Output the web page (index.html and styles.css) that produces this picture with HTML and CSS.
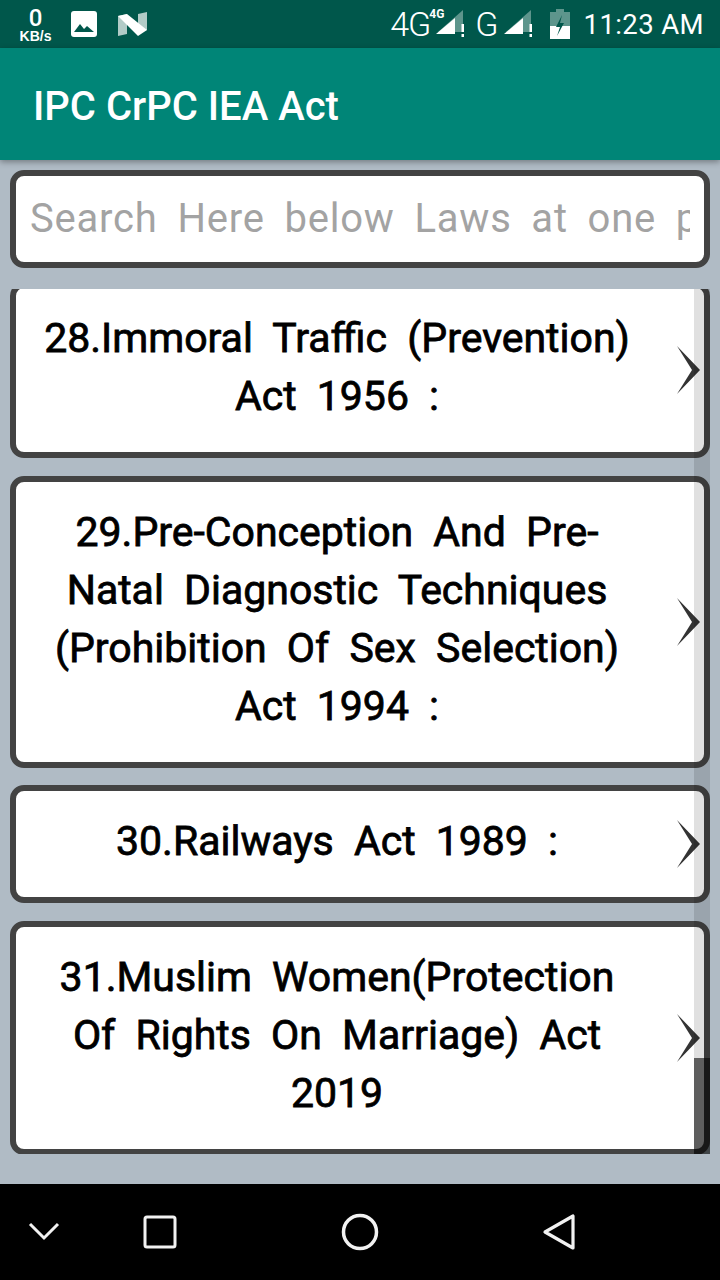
FILE: index.html
```html
<!DOCTYPE html>
<html lang="en">
<head>
<meta charset="utf-8">
<title>IPC CrPC IEA Act</title>
<link rel="stylesheet" href="styles.css">
</head>
<body>
<div class="screen">
  <header class="status">
    <div class="status-left">
      <div class="speed"><span class="speed-num">0</span><span class="speed-unit">KB/s</span></div>
      <svg class="ic-img" viewBox="0 0 26 26"><rect width="26" height="26" rx="3" fill="#fff"/><path d="M3 21l6-8 4 5 3-3 7 6z" fill="#00574b"/></svg>
      <svg class="ic-n" viewBox="0 0 29 24"><path d="M0 4l9-2v20l-9 2z" fill="#b2cbc7"/><path d="M20 2l9-2v18l-9 2z" fill="#b2cbc7"/><path d="M0 4l9-2 20 16-9 6z" fill="#fff"/></svg>
    </div>
    <div class="status-right">
      <span class="net">4G</span>
      <span class="net-small">4G</span>
      <svg class="ic-sig" viewBox="0 0 30 28"><path d="M27 0v22h-25z" fill="#5d958c"/><path d="M19 8v16h-19z" fill="#fff"/><path d="M24.500 14h2.500v8h-2.500zM24.500 24h2.500v3h-2.500z" fill="#fff" transform="translate(1 0)"/></svg>
      <span class="net net-g">G</span>
      <svg class="ic-sig ic-sig2" viewBox="0 0 30 28"><path d="M27 0v22h-25z" fill="#5d958c"/><path d="M19 8v16h-19z" fill="#fff"/><path d="M24.500 14h2.500v8h-2.500zM24.500 24h2.500v3h-2.500z" fill="#fff" transform="translate(1 0)"/></svg>
      <svg class="ic-bat" viewBox="0 0 20 30"><path d="M6 0h8v3h6v27h-20v-27h6z" fill="#5d958c"/><path d="M0 17h20v13h-20z" fill="#fff"/><path d="M12 6l-6 12h4l-3 9 7-13h-4z" fill="#00574b"/></svg>
      <span class="time">11:23 AM</span>
    </div>
  </header>
  <div class="appbar"><h1 class="title">IPC CrPC IEA Act</h1></div>
  <main class="content">
    <div class="search"><span class="placeholder">Search Here below Laws at one place</span></div>
    <div class="list">
      <div class="cards">
        <article class="card">
          <p class="card-text">28.Immoral Traffic (Prevention) Act 1956 :</p>
          <svg class="chev" viewBox="0 0 23 48"><path d="M0 0l23 24-23 24 15-24z"/></svg>
        </article>
        <article class="card">
          <p class="card-text">29.Pre-Conception And Pre-Natal Diagnostic Techniques (Prohibition Of Sex Selection) Act 1994 :</p>
          <svg class="chev" viewBox="0 0 23 48"><path d="M0 0l23 24-23 24 15-24z"/></svg>
        </article>
        <article class="card">
          <p class="card-text">30.Railways Act 1989 :</p>
          <svg class="chev" viewBox="0 0 23 48"><path d="M0 0l23 24-23 24 15-24z"/></svg>
        </article>
        <article class="card">
          <p class="card-text">31.Muslim Women(Protection Of Rights On Marriage) Act 2019</p>
          <svg class="chev" viewBox="0 0 23 48"><path d="M0 0l23 24-23 24 15-24z"/></svg>
        </article>
      </div>
      <div class="scroll-track"><div class="scroll-thumb"></div></div>
    </div>
  </main>
  <nav class="navbar">
    <svg class="nav-down" viewBox="0 0 36 24"><path d="M4 4l14 14 14-14" fill="none" stroke="#f2f2f2" stroke-width="3"/></svg>
    <svg class="nav-square" viewBox="0 0 34 34"><rect x="2" y="2" width="30" height="30" rx="2" fill="none" stroke="#f2f2f2" stroke-width="3"/></svg>
    <svg class="nav-circle" viewBox="0 0 38 38"><circle cx="19" cy="19" r="16.500" fill="none" stroke="#f2f2f2" stroke-width="3.500"/></svg>
    <svg class="nav-back" viewBox="0 0 34 38"><path d="M31 3v32l-28-16z" fill="none" stroke="#f2f2f2" stroke-width="3.200" stroke-linejoin="round"/></svg>
  </nav>
</div>
</body>
</html>
```

FILE: styles.css
```css
* { box-sizing: border-box; }
html, body { margin: 0; padding: 0; }
body { font-family: Roboto, "Liberation Sans", sans-serif; }
.screen { width: 720px; height: 1280px; display: flex; flex-direction: column; overflow: hidden; background: #b0bbc5; }
.status { height: 48px; flex: none; background: #00574b; color: #fff; display: flex; justify-content: space-between; align-items: center; padding: 0 16px 0 19px; }
.status-left { display: flex; align-items: center; }
.speed { display: flex; flex-direction: column; align-items: center; width: 33px; margin-top: 2px; }
.speed-num { font-size: 24px; line-height: 23px; font-weight: 500; }
.speed-unit { font-size: 14px; line-height: 13px; font-weight: 700; font-family: "Liberation Sans", sans-serif; }
.ic-img { width: 26px; height: 26px; margin-left: 19px; }
.ic-n { width: 29px; height: 24px; margin-left: 21px; }
.status-right { display: flex; align-items: center; }
.net { font-size: 34px; font-weight: 300; letter-spacing: -1px; line-height: 48px; }
.net-g { margin-left: 9px; }
.net-small { font-size: 12px; font-weight: 700; margin: -20px 0 0 -1px; width: 17px; }
.ic-sig { width: 30px; height: 28px; margin-left: -10px; }
.ic-sig2 { margin-left: 6px; }
.ic-bat { width: 20px; height: 30px; margin-left: 16px; }
.time { font-size: 27.500px; margin-left: 14px; letter-spacing: 0.400px; }
.appbar { height: 112px; flex: none; background: #008577; display: flex; align-items: center; padding-left: 33px; box-shadow: 0 2px 6px rgba(0,0,0,.35); position: relative; }
.title { margin: 0; color: #fff; font-size: 40px; font-weight: 500; line-height: 1; position: relative; top: 3px; }
.content { flex: 1; display: flex; flex-direction: column; min-height: 0; padding-bottom: 30px; }
.search { height: 98px; flex: none; margin: 10px 10px 0; background: #fff; border: 6px solid #434343; border-radius: 14px; padding: 0 14px 0 14px; display: flex; align-items: center; overflow: hidden; }
.placeholder { display: block; width: 100%; overflow: hidden; white-space: nowrap; color: #a3a3a3; font-size: 40px; word-spacing: 9px; letter-spacing: 0.800px; position: relative; top: -1px; }
.list { flex: 1; margin-top: 21px; position: relative; overflow: hidden; min-height: 0; }
.cards { margin-top: -7px; padding: 0 10px; display: flex; flex-direction: column; gap: 17.500px; }
.card { background: #fff; border: 6px solid #434343; border-radius: 14px; display: flex; align-items: center; padding: 21px 4px 27px 24px; }
.card-text { margin: 0; width: 594px; flex: none; text-align: center; font-size: 41px; line-height: 58px; color: #000; word-spacing: 10px; -webkit-text-stroke: 0.800px #000; }
.chev { width: 23px; height: 48px; flex: none; margin-left: 43px; margin-top: 6px; fill: #333; }
.scroll-track { position: absolute; top: 0; bottom: 0; right: 10px; width: 16px; background: rgba(0,0,0,.12); }
.scroll-thumb { position: absolute; left: 0; right: 0; bottom: 0; height: 96px; background: rgba(0,0,0,.58); }
.navbar { height: 96px; flex: none; background: #000; display: grid; grid-template-columns: 88px 144px 256px 1fr; align-items: center; }
.nav-down { width: 36px; height: 24px; justify-self: center; }
.nav-square { width: 34px; height: 34px; justify-self: center; margin-left: 0; }
.nav-circle { width: 38px; height: 38px; justify-self: center; margin-left: 0; }
.nav-back { width: 34px; height: 38px; margin-left: 54px; }
```
